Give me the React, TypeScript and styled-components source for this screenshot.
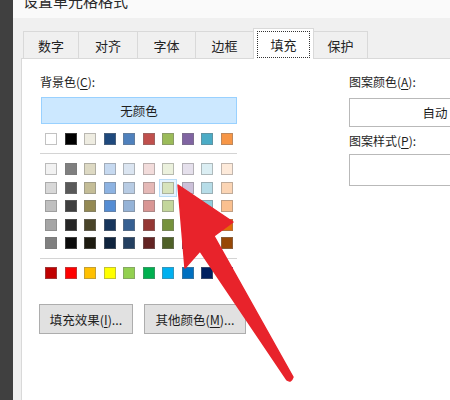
import React from 'react';
import styled, { createGlobalStyle } from 'styled-components';

const GlobalStyle = createGlobalStyle`
	html, body {
		margin: 0;
		padding: 0;
		width: 450px;
		height: 400px;
		overflow: hidden;
		background: #ffffff;
	}
	* {
		box-sizing: border-box;
	}
`;

const themeRow = ['#FFFFFF', '#000000', '#EEECE1', '#1F497D', '#4F81BD', '#C0504D', '#9BBB59', '#8064A2', '#4BACC6', '#F79646'];

const tintRows = [
	['#F2F2F2', '#7F7F7F', '#DDD9C3', '#C6D9F0', '#DBE5F1', '#F2DCDB', '#EBF1DD', '#E5E0EC', '#DBEEF3', '#FDEADA'],
	['#D8D8D8', '#595959', '#C4BD97', '#8DB3E2', '#B8CCE4', '#E5B9B7', '#D7E3BC', '#CCC1D9', '#B7DDE8', '#FBD5B5'],
	['#BFBFBF', '#3F3F3F', '#938953', '#548DD4', '#95B3D7', '#D99694', '#C3D69B', '#B2A2C7', '#92CDDC', '#FAC08F'],
	['#A5A5A5', '#262626', '#494429', '#17365D', '#366092', '#953734', '#76923C', '#5F497A', '#31859B', '#E36C09'],
	['#7F7F7F', '#0C0C0C', '#1D1B10', '#0F243E', '#244061', '#632423', '#4F6128', '#3F3151', '#205867', '#974806'],
];

const standardRow = ['#C00000', '#FF0000', '#FFC000', '#FFFF00', '#92D050', '#00B050', '#00B0F0', '#0070C0', '#002060', '#7030A0'];

const tabs = [
	{ label: '数字', width: 56 },
	{ label: '对齐', width: 60 },
	{ label: '字体', width: 59 },
	{ label: '边框', width: 59 },
	{ label: '填充', width: 61, active: true },
	{ label: '保护', width: 55 },
];

const Page = styled.div`
	position: relative;
	display: flex;
	width: 450px;
	height: 400px;
	overflow: hidden;
	font-family: 'Noto Sans CJK SC', 'Noto Sans', sans-serif;
	color: #1e1e1e;
`;

const SideStrip = styled.div`
	width: 13px;
	flex-shrink: 0;
	background: #404040;
`;

const Dialog = styled.div`
	flex: 1;
	display: flex;
	flex-direction: column;
	background: #f0f0f0;
	min-width: 0;
`;

const TitleBar = styled.div`
	height: 18px;
	flex-shrink: 0;
	overflow: hidden;
	background: #fafafa;
	padding-left: 10px;
`;

const TitleText = styled.div`
	margin-top: -10px;
	font-size: 15px;
	line-height: 22px;
	color: #2a2a2a;
`;

const Body = styled.div`
	flex: 1;
	display: flex;
	flex-direction: column;
	padding: 10px 0 0 8px;
`;

const TabRow = styled.div`
	display: flex;
	align-items: flex-end;
	height: 30px;
	padding-left: 2px;
`;

const Tab = styled.div<{ $w: number; $active?: boolean }>`
	position: relative;
	width: ${(p) => p.$w}px;
	height: ${(p) => (p.$active ? 31 : 27)}px;
	margin-left: -1px;
	margin-bottom: ${(p) => (p.$active ? -1 : 0)}px;
	display: flex;
	align-items: center;
	justify-content: center;
	border: 1px solid #d9d9d9;
	border-bottom: none;
	background: ${(p) => (p.$active ? '#ffffff' : '#f0f0f0')};
	z-index: ${(p) => (p.$active ? 2 : 1)};
	font-size: 13px;
	color: #222;
	&:first-child {
		margin-left: 0;
	}
`;

const FocusRing = styled.span`
	display: flex;
	align-items: center;
	justify-content: center;
	width: 51px;
	height: 25px;
	margin-top: 1px;
	outline: 1px dotted #333;
`;

const Panel = styled.div`
	flex: 1;
	display: flex;
	background: #ffffff;
	border: 1px solid #d9d9d9;
	border-right: none;
	border-bottom: none;
	padding: 15px 0 0 18px;
`;

const LeftCol = styled.div`
	width: 197px;
	flex-shrink: 0;
	display: flex;
	flex-direction: column;
`;

const RightCol = styled.div`
	width: 172px;
	flex-shrink: 0;
	margin-left: 112px;
	display: flex;
	flex-direction: column;
`;

const Label = styled.div<{ $mt?: number }>`
	font-size: 12px;
	line-height: 16px;
	margin-top: ${(p) => p.$mt ?? 0}px;
	color: #1e1e1e;
	white-space: nowrap;
	u {
		text-underline-offset: 2px;
	}
`;

const NoColorButton = styled.div`
	margin: 7px 0 0 1px;
	height: 27px;
	display: flex;
	align-items: center;
	justify-content: center;
	background: #cce8ff;
	border: 1px solid #99d1ff;
	font-size: 12.5px;
	color: #1e1e1e;
`;

const SwatchRow = styled.div<{ $mt: number }>`
	display: flex;
	gap: 7.5px;
	padding-left: 5px;
	margin-top: ${(p) => p.$mt}px;
`;

const SwatchGrid = styled.div`
	display: flex;
	flex-direction: column;
	gap: 6.5px;
	margin-top: 9px;
`;

const Swatch = styled.div<{ $c: string; $hover?: boolean }>`
	width: 12px;
	height: 12px;
	flex-shrink: 0;
	background: ${(p) => p.$c};
	border: 1px solid rgba(120, 120, 120, 0.45);
	box-shadow: ${(p) => (p.$hover ? '0 0 0 2px #e5f3ff, 0 0 0 3px #b9dcf7' : 'none')};
`;

const Separator = styled.div<{ $mt: number }>`
	height: 1px;
	background: #d4d4d4;
	margin-top: ${(p) => p.$mt}px;
`;

const ButtonRow = styled.div`
	display: flex;
	gap: 11px;
	margin: 25px 0 0 -1px;
`;

const PushButton = styled.div<{ $w: number }>`
	width: ${(p) => p.$w}px;
	flex-shrink: 0;
	height: 30px;
	display: flex;
	align-items: center;
	justify-content: center;
	background: #e1e1e1;
	border: 1px solid #adadad;
	font-size: 12.5px;
	color: #1e1e1e;
	white-space: nowrap;
	u {
		text-underline-offset: 2px;
	}
`;

const ComboBox = styled.div<{ $h: number; $mt: number }>`
	height: ${(p) => p.$h}px;
	margin-top: ${(p) => p.$mt}px;
	display: flex;
	align-items: center;
	justify-content: center;
	background: #ffffff;
	border: 1px solid #b9b9b9;
	font-size: 12.5px;
	color: #1e1e1e;
`;

const ArrowLayer = styled.svg`
	position: absolute;
	left: 0;
	top: 0;
	width: 450px;
	height: 400px;
	pointer-events: none;
`;

const RedArrow = () => (
	<ArrowLayer viewBox="0 0 450 400">
		<path
			d="M178 185 L233 222 L214 236 L293 377 Q291 383 287 380 L200 251 L185 268 Z"
			fill="#e8232b"
			stroke="#e8232b"
			strokeWidth="1.5"
			strokeLinejoin="round"
		/>
	</ArrowLayer>
);

const App = () => (
	<>
		<GlobalStyle />
		<Page>
			<SideStrip />
			<Dialog>
				<TitleBar>
					<TitleText>设置单元格格式</TitleText>
				</TitleBar>
				<Body>
					<TabRow>
						{tabs.map((t) => (
							<Tab key={t.label} $w={t.width} $active={t.active}>
								{t.active ? <FocusRing>{t.label}</FocusRing> : t.label}
							</Tab>
						))}
					</TabRow>
					<Panel>
						<LeftCol>
							<Label>
								背景色(<u>C</u>):
							</Label>
							<NoColorButton>无颜色</NoColorButton>
							<SwatchRow $mt={9}>
								{themeRow.map((c) => (
									<Swatch key={c} $c={c} />
								))}
							</SwatchRow>
							<Separator $mt={8} />
							<SwatchGrid>
								{tintRows.map((row, ri) => (
									<SwatchRow key={ri} $mt={0}>
										{row.map((c, ci) => (
											<Swatch key={c + ci} $c={c} $hover={ri === 1 && ci === 6} />
										))}
									</SwatchRow>
								))}
							</SwatchGrid>
							<Separator $mt={9} />
							<SwatchRow $mt={8}>
								{standardRow.map((c) => (
									<Swatch key={c} $c={c} />
								))}
							</SwatchRow>
							<ButtonRow>
								<PushButton $w={94}>
									填充效果(<u>I</u>)...
								</PushButton>
								<PushButton $w={102}>
									其他颜色(<u>M</u>)...
								</PushButton>
							</ButtonRow>
						</LeftCol>
						<RightCol>
							<Label>
								图案颜色(<u>A</u>):
							</Label>
							<ComboBox $h={29} $mt={8}>
								自动
							</ComboBox>
							<Label $mt={6}>
								图案样式(<u>P</u>):
							</Label>
							<ComboBox $h={32} $mt={5} />
						</RightCol>
					</Panel>
				</Body>
			</Dialog>
			<RedArrow />
		</Page>
	</>
);

export default App;
